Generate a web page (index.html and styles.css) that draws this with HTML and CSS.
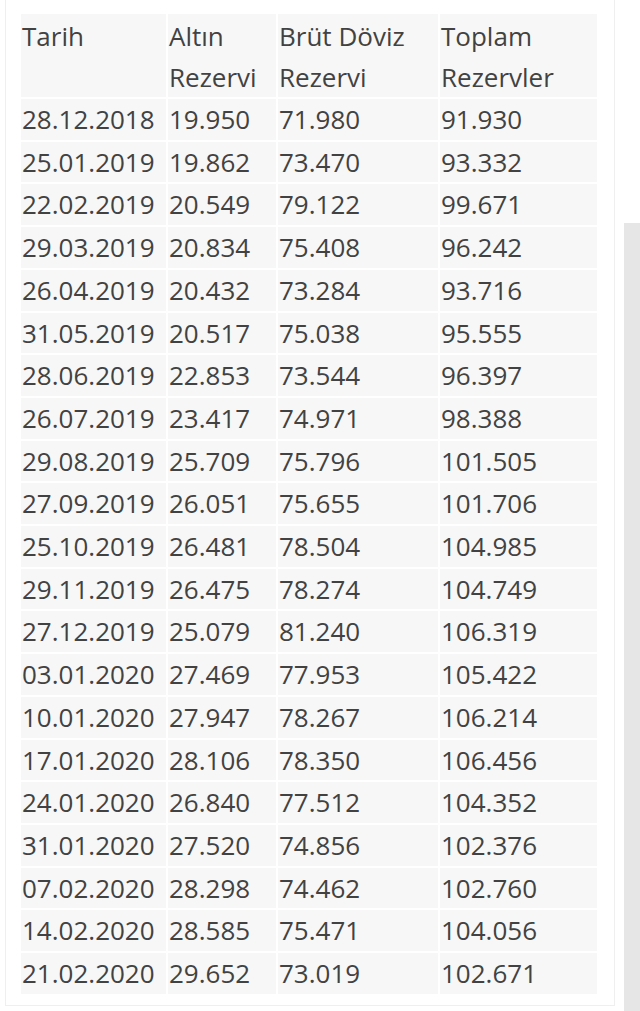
FILE: index.html
```html
<!DOCTYPE html>
<html lang="tr">
<head>
  <meta charset="UTF-8">
  <title>Rezervler</title>
  <link rel="stylesheet" href="styles.css">
</head>
<body>
  <div class="page">
    <div class="panel">
      <table class="reserves">
        <colgroup>
          <col class="c-date">
          <col class="c-gold">
          <col class="c-fx">
          <col class="c-total">
        </colgroup>
        <thead>
          <tr>
            <th>Tarih</th>
            <th>Altın Rezervi</th>
            <th>Brüt Döviz Rezervi</th>
            <th>Toplam Rezervler</th>
          </tr>
        </thead>
        <tbody>
          <tr><td>28.12.2018</td><td>19.950</td><td>71.980</td><td>91.930</td></tr>
          <tr><td>25.01.2019</td><td>19.862</td><td>73.470</td><td>93.332</td></tr>
          <tr><td>22.02.2019</td><td>20.549</td><td>79.122</td><td>99.671</td></tr>
          <tr><td>29.03.2019</td><td>20.834</td><td>75.408</td><td>96.242</td></tr>
          <tr><td>26.04.2019</td><td>20.432</td><td>73.284</td><td>93.716</td></tr>
          <tr><td>31.05.2019</td><td>20.517</td><td>75.038</td><td>95.555</td></tr>
          <tr><td>28.06.2019</td><td>22.853</td><td>73.544</td><td>96.397</td></tr>
          <tr><td>26.07.2019</td><td>23.417</td><td>74.971</td><td>98.388</td></tr>
          <tr><td>29.08.2019</td><td>25.709</td><td>75.796</td><td>101.505</td></tr>
          <tr><td>27.09.2019</td><td>26.051</td><td>75.655</td><td>101.706</td></tr>
          <tr><td>25.10.2019</td><td>26.481</td><td>78.504</td><td>104.985</td></tr>
          <tr><td>29.11.2019</td><td>26.475</td><td>78.274</td><td>104.749</td></tr>
          <tr><td>27.12.2019</td><td>25.079</td><td>81.240</td><td>106.319</td></tr>
          <tr><td>03.01.2020</td><td>27.469</td><td>77.953</td><td>105.422</td></tr>
          <tr><td>10.01.2020</td><td>27.947</td><td>78.267</td><td>106.214</td></tr>
          <tr><td>17.01.2020</td><td>28.106</td><td>78.350</td><td>106.456</td></tr>
          <tr><td>24.01.2020</td><td>26.840</td><td>77.512</td><td>104.352</td></tr>
          <tr><td>31.01.2020</td><td>27.520</td><td>74.856</td><td>102.376</td></tr>
          <tr><td>07.02.2020</td><td>28.298</td><td>74.462</td><td>102.760</td></tr>
          <tr><td>14.02.2020</td><td>28.585</td><td>75.471</td><td>104.056</td></tr>
          <tr><td>21.02.2020</td><td>29.652</td><td>73.019</td><td>102.671</td></tr>
        </tbody>
      </table>
    </div>
    <div class="scroll">
      <div class="thumb"></div>
    </div>
  </div>
</body>
</html>
```

FILE: styles.css
```css
body {
  margin: 0;
  background-color: white;
  font-family: "Open Sans", "Noto Sans", sans-serif;
  color: #424242;
  overflow: hidden;
}

.page {
  display: flex;
  height: 1011px;
}

.panel {
  margin-left: 5px;
  width: 610px;
  height: 1006px;
  border: 1px solid #efefef;
  border-top: none;
  padding: 12px 0 0 13px;
  box-sizing: border-box;
}

.scroll {
  display: flex;
  flex-direction: column;
  width: 16px;
  margin-left: 9px;
  padding-top: 223px;
}

.thumb {
  flex: 1;
  background-color: #e6e6e6;
}

.reserves {
  border-collapse: separate;
  border-spacing: 2px;
  table-layout: fixed;
  width: 580px;
  font-size: 26px;
}

.c-date { width: 145px; }
.c-gold { width: 108px; }
.c-fx { width: 160px; }
.c-total { width: 157px; }

th, td {
  background-color: #f7f7f7;
  padding: 0 1px;
  text-align: left;
  vertical-align: top;
}

th {
  font-weight: normal;
  line-height: 40.5px;
  padding-top: 2px;
}

td {
  line-height: 40.7px;
  white-space: nowrap;
}
```
